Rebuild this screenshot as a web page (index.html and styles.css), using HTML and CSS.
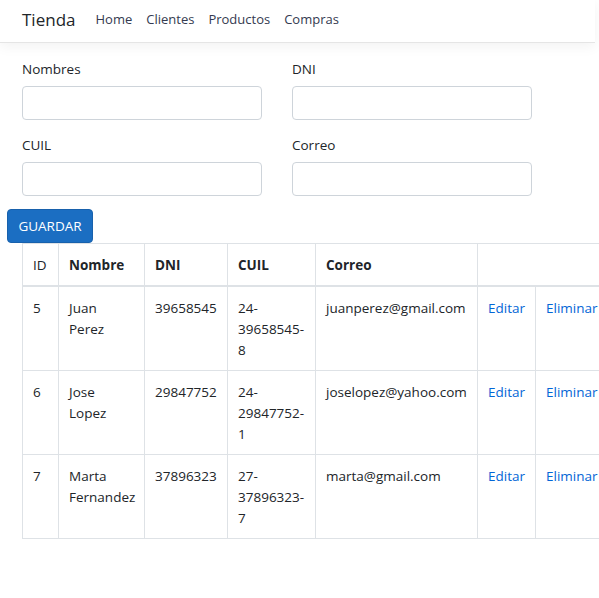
FILE: index.html
```html
<!DOCTYPE html>
<html lang="es">
<head>
<meta charset="utf-8">
<title>Tienda</title>
<link rel="stylesheet" href="styles.css">
</head>
<body>
<div class="page">
  <nav class="navbar">
    <a class="brand" href="#">Tienda</a>
    <ul class="nav">
      <li><a href="#">Home</a></li>
      <li><a href="#">Clientes</a></li>
      <li><a href="#">Productos</a></li>
      <li><a href="#">Compras</a></li>
    </ul>
  </nav>
  <main class="content">
    <form class="form-grid">
      <div class="group"><label>Nombres</label><input type="text"></div>
      <div class="group"><label>DNI</label><input type="text"></div>
      <div class="group"><label>CUIL</label><input type="text"></div>
      <div class="group"><label>Correo</label><input type="text"></div>
    </form>
    <button class="btn" type="button">GUARDAR</button>
    <table class="table">
      <colgroup>
        <col class="c-id"><col class="c-nombre"><col class="c-dni"><col class="c-cuil"><col class="c-correo"><col class="c-edit"><col class="c-del">
      </colgroup>
      <thead>
        <tr><th class="plain">ID</th><th>Nombre</th><th>DNI</th><th>CUIL</th><th>Correo</th><th colspan="2"></th></tr>
      </thead>
      <tbody>
        <tr><td>5</td><td>Juan Perez</td><td>39658545</td><td>24-39658545-8</td><td>juanperez@gmail.com</td><td><a href="#">Editar</a></td><td><a href="#">Eliminar</a></td></tr>
        <tr><td>6</td><td>Jose Lopez</td><td>29847752</td><td>24-29847752-1</td><td>joselopez@yahoo.com</td><td><a href="#">Editar</a></td><td><a href="#">Eliminar</a></td></tr>
        <tr><td>7</td><td>Marta Fernandez</td><td>37896323</td><td>27-37896323-7</td><td>marta@gmail.com</td><td><a href="#">Editar</a></td><td><a href="#">Eliminar</a></td></tr>
      </tbody>
    </table>
  </main>
</div>
</body>
</html>
```
FILE: styles.css
```css
html, body {
  margin: 0;
  padding: 0;
  overflow-x: hidden;
}
body {
  font-family: "Open Sans", "Noto Sans", sans-serif;
  font-size: 13.5px;
  line-height: 21px;
  color: #212529;
  background: #fff;
}
.page {
  width: 599px;
}
.navbar {
  width: 595px;
  height: 43px;
  box-sizing: border-box;
  display: flex;
  align-items: center;
  padding: 0 0 4px 22px;
  background: #fff;
  border-bottom: 1px solid #e5e5e5;
  box-shadow: 0 4px 12px rgba(0, 0, 0, 0.05);
  position: relative;
}
.brand {
  font-size: 17px;
  color: #212529;
  text-decoration: none;
  margin-right: 20px;
}
.nav {
  list-style: none;
  margin: 0;
  padding: 0;
  display: flex;
  gap: 14px;
}
.nav a {
  color: #343a50;
  text-decoration: none;
  font-size: 13px;
}
.content {
  padding-top: 16px;
}
.form-grid {
  display: grid;
  grid-template-columns: 240px 240px;
  column-gap: 30px;
  margin: 0 0 0 22px;
}
.group {
  display: flex;
  flex-direction: column;
  margin-bottom: 15px;
}
.group label {
  margin-bottom: 6px;
}
.group input {
  height: 34px;
  box-sizing: border-box;
  border: 1px solid #ced4da;
  border-radius: 4px;
  margin: 0;
  font: inherit;
}
.btn {
  display: block;
  margin: -2px 0 0 7px;
  height: 34px;
  width: 86px;
  padding: 0;
  box-sizing: border-box;
  background: #1b6ec2;
  border: 1px solid #1861ac;
  border-radius: 4px;
  color: #fff;
  font: inherit;
}
.table {
  margin-left: 22px;
  border-collapse: collapse;
  table-layout: fixed;
  width: 584px;
}
.c-id { width: 36px; }
.c-nombre { width: 86px; }
.c-dni { width: 83px; }
.c-cuil { width: 88px; }
.c-correo { width: 162px; }
.c-edit { width: 58px; }
.c-del { width: 71px; }
.table th,
.table td {
  border: 1px solid #dee2e6;
  padding: 11px 10px 9px;
  text-align: left;
  vertical-align: top;
}
.table th {
  font-weight: 700;
  border-bottom: 2px solid #dee2e6;
}
.table th.plain {
  font-weight: 400;
}
.table a {
  color: #0366d6;
  text-decoration: none;
}
```
